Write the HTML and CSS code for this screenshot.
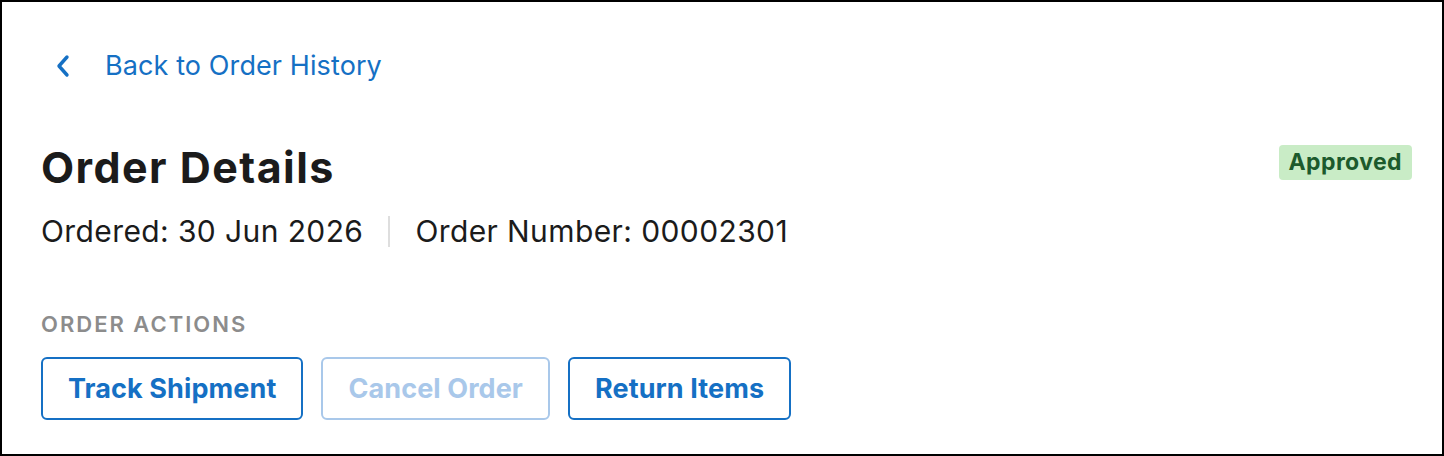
FILE: index.html
```html
<!DOCTYPE html>
<html lang="en">
<head>
<meta charset="utf-8">
<title>Order Details</title>
<link rel="stylesheet" href="styles.css">
</head>
<body>
<main class="order-page">
  <a class="back-link" href="#">
    <svg class="back-icon" viewBox="0 0 16 24" width="16" height="24" aria-hidden="true">
      <path d="M12 3 L4 12 L12 21" fill="none" stroke="currentColor" stroke-width="3.4" stroke-linecap="round" stroke-linejoin="round"/>
    </svg>
    <span>Back to Order History</span>
  </a>

  <header class="order-header">
    <div class="order-title-block">
      <h1 class="order-title">Order Details</h1>
      <div class="order-meta">
        <span>Ordered: 30 Jun 2026</span>
        <span class="meta-divider"></span>
        <span>Order Number: 00002301</span>
      </div>
    </div>
    <span class="status-badge">Approved</span>
  </header>

  <section class="order-actions">
    <h2 class="actions-label">ORDER ACTIONS</h2>
    <div class="actions-row">
      <button class="action-btn" type="button">Track Shipment</button>
      <button class="action-btn" type="button" disabled>Cancel Order</button>
      <button class="action-btn" type="button">Return Items</button>
    </div>
  </section>
</main>
</body>
</html>
```

FILE: styles.css
```css
* {
  box-sizing: border-box;
}

html, body {
  margin: 0;
  height: 100%;
}

body {
  font-family: Inter, "Noto Sans", sans-serif;
  color: #1b1b1b;
  background: #ffffff;
}

.order-page {
  height: 456px;
  border: 2px solid #000000;
  padding: 47px 30px 0 39px;
  display: flex;
  flex-direction: column;
}

.back-link {
  display: flex;
  align-items: center;
  gap: 34px;
  color: #1570c4;
  text-decoration: none;
  font-size: 27px;
  line-height: 34px;
  letter-spacing: 0.1px;
  padding-left: 14px;
}

.back-icon {
  display: block;
}

.order-header {
  display: flex;
  justify-content: space-between;
  align-items: flex-start;
  margin-top: 58px;
}

.order-title {
  margin: 0;
  font-size: 43px;
  line-height: 52px;
  font-weight: 700;
  letter-spacing: 1.45px;
  color: #1b1b1b;
}

.order-meta {
  display: flex;
  align-items: center;
  gap: 25px;
  margin-top: 20px;
  font-size: 30px;
  line-height: 36px;
  letter-spacing: 0.4px;
}

.meta-divider {
  width: 2px;
  height: 31px;
  background: #dedede;
}

.status-badge {
  margin-top: 4px;
  background: #c9ecc6;
  color: #1c5a2c;
  font-weight: 700;
  font-size: 23px;
  line-height: 35px;
  letter-spacing: 0.4px;
  padding: 0 10px;
  border-radius: 4px;
}

.order-actions {
  margin-top: 61px;
}

.actions-label {
  margin: 0;
  font-size: 22px;
  line-height: 28px;
  font-weight: 600;
  letter-spacing: 2px;
  color: #8c8c8c;
}

.actions-row {
  display: flex;
  gap: 18px;
  margin-top: 19px;
}

.action-btn {
  font-family: inherit;
  font-size: 27px;
  font-weight: 700;
  letter-spacing: 0.1px;
  color: #1570c4;
  background: #ffffff;
  border: 2px solid #1570c4;
  border-radius: 6px;
  height: 63px;
  padding: 0 25px;
}

.action-btn:disabled {
  color: #a9c8ea;
  border-color: #a9c8ea;
}
```
